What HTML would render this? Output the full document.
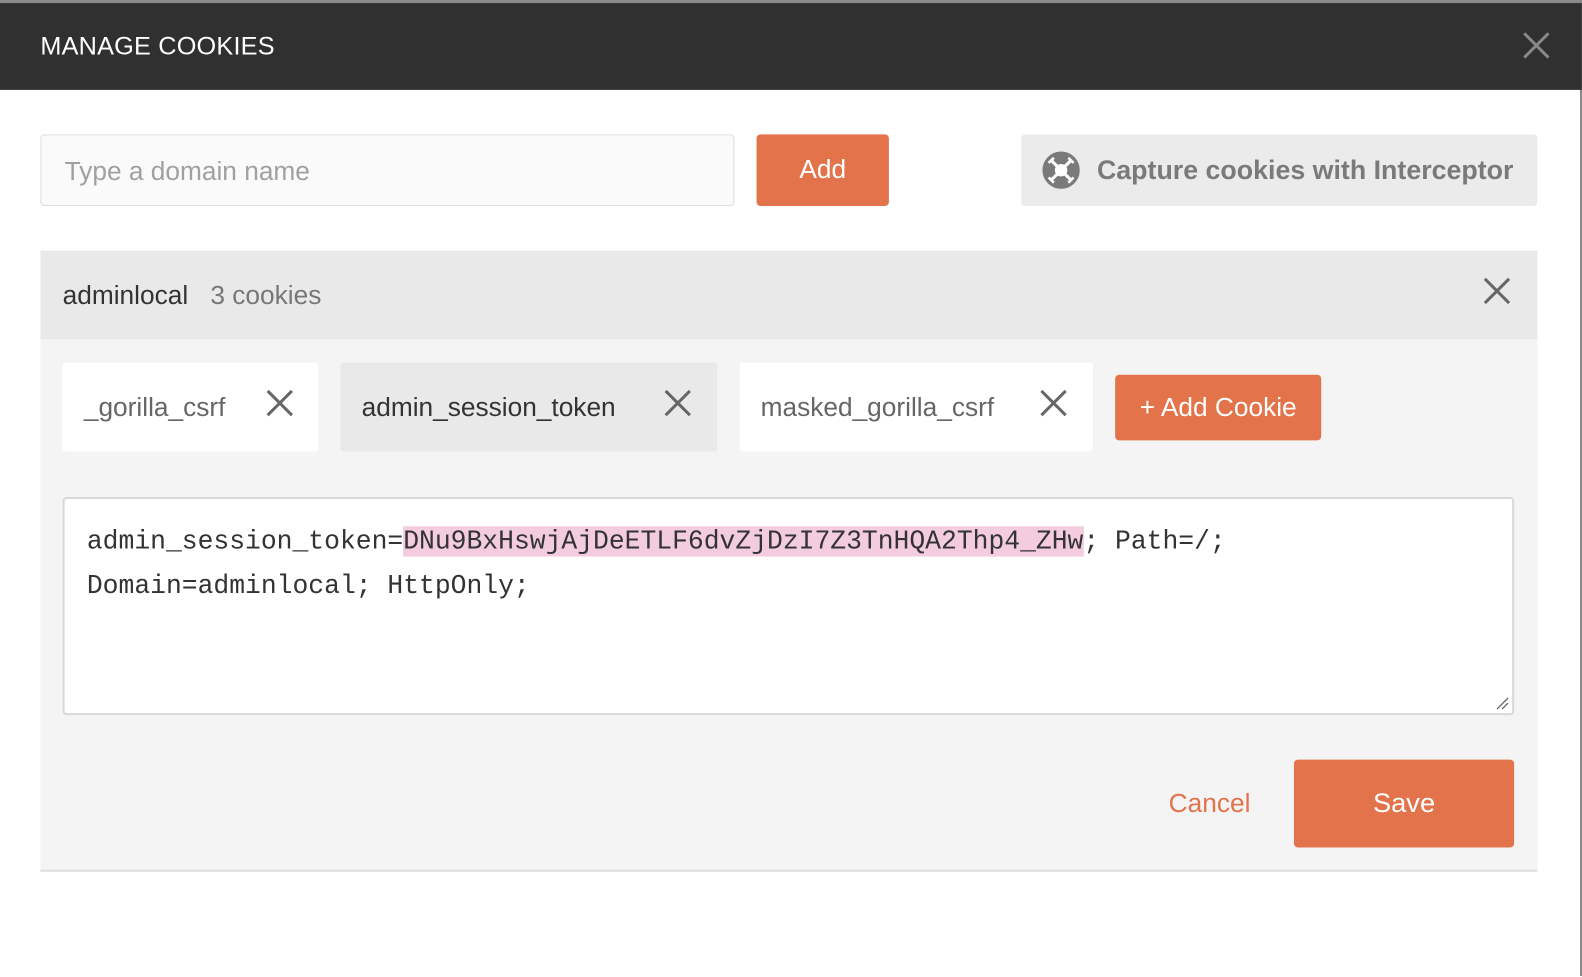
<!DOCTYPE html>
<html><head><meta charset="utf-8"><style>
*{box-sizing:border-box;margin:0;padding:0}
body{width:1582px;height:976px;background:#fff;font-family:"Liberation Sans",sans-serif;position:relative;overflow:hidden}
.top{position:absolute;left:0;top:0;width:1582px;height:3px;background:#8a8a8a}
.rs{position:absolute;left:1580px;top:0;width:2px;height:976px;background:#888}
.wrap{position:absolute;left:0;top:0;width:1566px;height:967px;transform:scale(1.0101);transform-origin:0 0}
.hdr{position:absolute;left:0;top:3px;width:1566px;height:86px;background:#303030;color:#fff;font-size:25px;padding:29px 0 0 40px;letter-spacing:0.2px}
.x{position:absolute}
.inp{position:absolute;left:40px;top:133px;width:687px;height:71px;border:1px solid #ddd;border-radius:4px;background:#fafafa;color:#a0a0a0;font-size:26px;padding:20px 23px}
.btn{position:absolute;background:#e2734a;color:#fff;border-radius:4px;text-align:center}
.cap{position:absolute;left:1011px;top:133px;width:511px;height:71px;background:#ebebeb;border-radius:4px;color:#7a7a7a;font-size:26.5px;font-weight:bold;padding:20px 0 0 75px}
.panel{position:absolute;left:40px;top:248px;width:1482px;height:615px;background:#f4f4f4;border-bottom:2px solid #ddd}
.ph{height:88px;background:#e9e9e9;padding:29px 0 0 22px;font-size:26px;color:#333}
.tab{position:absolute;top:111px;height:88px;border-radius:3px;font-size:26px;padding:29px 0 0 21px;color:#666;background:#fff}
.ta{position:absolute;left:22px;top:244px;width:1437px;height:216px;background:#fff;border:2px solid #d8d8d8;border-radius:4px;padding:20px 22px;font-family:"Liberation Mono",monospace;font-size:26.1px;line-height:44px;color:#333}
.hl{background:#f4cce0}
</style></head><body>
<div class="top"></div><div class="rs"></div>
<div class="wrap">
<div class="hdr">MANAGE COOKIES</div>
<svg class="x" style="left:1507px;top:31px" width="28" height="28"><path d="M2 2L26 26M26 2L2 26" stroke="#888" stroke-width="3"/></svg>
<div class="inp">Type a domain name</div>
<div class="btn" style="left:749px;top:133px;width:131px;height:71px;font-size:26px;padding-top:19px">Add</div>
<div class="cap">Capture cookies with Interceptor</div>
<svg class="x" style="left:1032px;top:150px" width="37" height="37" viewBox="0 0 36 36"><circle cx="18" cy="18" r="18" fill="#7a7a7a"/><circle cx="18" cy="18" r="6" fill="#fff"/><path d="M9 9L27 27M27 9L9 27" stroke="#fff" stroke-width="3"/><path d="M6 11L11 6M25 6L30 11M30 25L25 30M6 25L11 30" stroke="#fff" stroke-width="2.5"/></svg>
<div class="panel">
 <div class="ph">adminlocal<span style="color:#777;margin-left:22px">3 cookies</span></div>
 <svg class="x" style="left:1428px;top:26px" width="28" height="28"><path d="M2 2L26 26M26 2L2 26" stroke="#666" stroke-width="3"/></svg>
 <div class="tab" style="left:22px;width:253px">_gorilla_csrf</div>
 <div class="tab" style="left:297px;width:373px;background:#e9e9e9;color:#333">admin_session_token</div>
 <div class="tab" style="left:692px;width:350px">masked_gorilla_csrf</div>
 <svg class="x" style="left:223px;top:137px" width="28" height="28"><path d="M2 2L26 26M26 2L2 26" stroke="#666" stroke-width="3"/></svg>
 <svg class="x" style="left:617px;top:137px" width="28" height="28"><path d="M2 2L26 26M26 2L2 26" stroke="#666" stroke-width="3"/></svg>
 <svg class="x" style="left:989px;top:137px" width="28" height="28"><path d="M2 2L26 26M26 2L2 26" stroke="#666" stroke-width="3"/></svg>
 <div class="btn" style="left:1064px;top:123px;width:204px;height:65px;font-size:26px;padding-top:17px">+ Add Cookie</div>
 <div class="ta">admin_session_token=<span class="hl">DNu9BxHswjAjDeETLF6dvZjDzI7Z3TnHQA2Thp4_ZHw</span>; Path=/;<br>Domain=adminlocal; HttpOnly;
 <svg class="x" style="right:3px;bottom:3px" width="14" height="14"><path d="M2 13L13 2M7 13L13 7" stroke="#666" stroke-width="1.3"/></svg></div>
 <div style="position:absolute;left:1117px;top:532px;font-size:26px;color:#e2734a">Cancel</div>
 <div class="btn" style="left:1241px;top:504px;width:218px;height:87px;font-size:27px;padding-top:28px">Save</div>
</div>
</div>
</body></html>
